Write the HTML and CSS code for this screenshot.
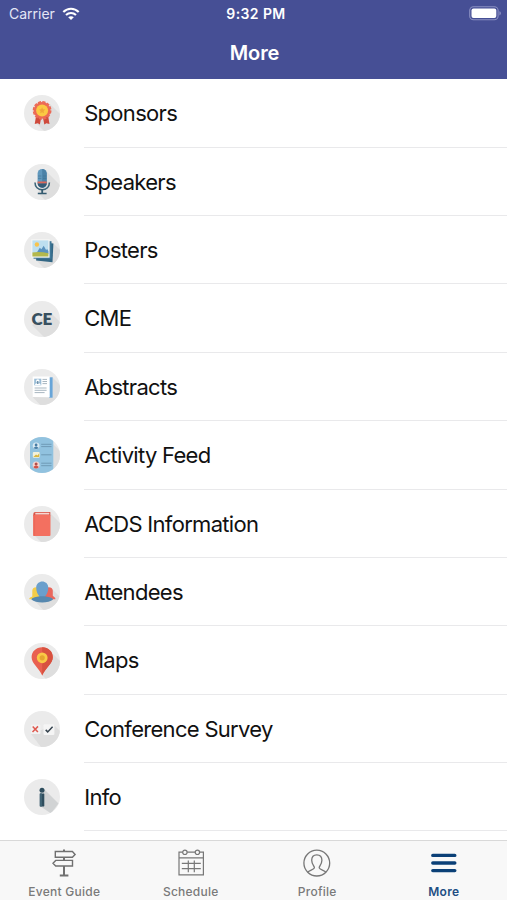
FILE: index.html
```html
<!DOCTYPE html>
<html lang="en">
<head>
<meta charset="utf-8">
<title>More</title>
<link rel="stylesheet" href="styles.css">
</head>
<body>
<svg class="defs" aria-hidden="true">
  <defs><clipPath id="disc"><circle cx="18" cy="18" r="18"/></clipPath></defs>
</svg>
<div class="app">
  <header class="header">
    <div class="status">
      <div class="carrier"><span>Carrier</span>
        <svg width="18" height="14" viewBox="0 0 18 14" fill="none" stroke="#fff" stroke-width="2.1"><path d="M1.3 5.1C5.7.7 12.3.7 16.7 5.1M4 8.1c2.9-2.8 7.1-2.8 10 0"/><path d="M6.2 10.3c1.6-1.5 4-1.5 5.6 0L9 13.1z" fill="#fff" stroke="none"/></svg>
      </div>
      <div class="time">9:32 PM</div>
      <svg class="battery" width="33" height="15" viewBox="0 0 33 15"><rect x=".7" y=".8" width="28.4" height="13" rx="3.8" fill="none" stroke="#8b90c2" stroke-width="1.1"/><rect x="2.5" y="2.5" width="24.8" height="9.6" rx="2" fill="#fff"/><path d="M30.4 5.2c2 .7 2 3.5 0 4.2z" fill="#8b90c2"/></svg>
    </div>
    <h1 class="title">More</h1>
  </header>

  <main class="list">
    <div class="row">
      <svg class="icon" viewBox="0 0 36 36"><g clip-path="url(#disc)"><path class="disc" d="M0 0h36v36H0z"/><path class="shade" d="M26 9l14 14v17H24l-12-12z"/></g><path d="M12.4 19l-1.7 10 3.1-.8 2.1 1.4L17.7 20zM23.8 19l1.7 10-3.1-.8-2.1 1.4L18.5 20z" fill="#cf4a3c"/><circle cx="18.1" cy="15.4" r="8.4" fill="#ec6a55"/><circle cx="18.1" cy="15.4" r="8.6" fill="none" stroke="#ec6a55" stroke-width="1.6" stroke-dasharray="3.2 1.3"/><circle cx="18.1" cy="15.4" r="6" fill="#fbc943"/><path d="M18.1 12.3l.9 2 2.2.3-1.6 1.5.4 2.2-1.9-1.1-1.9 1.1.4-2.2-1.6-1.5 2.2-.3z" fill="#efa83a"/></svg>
      <div class="label">Sponsors</div>
    </div>
    <div class="row">
      <svg class="icon" viewBox="0 0 36 36"><g clip-path="url(#disc)"><path class="disc" d="M0 0h36v36H0z"/><path class="shade" d="M22 7l18 18v15H25L14 29z"/></g><path d="M11 18.5c0 4.4 3 7.3 7.2 7.3s7.2-2.9 7.2-7.3" fill="none" stroke="#3d6579" stroke-width="1.6"/><path d="M17.3 25h1.8v3.9h-1.8zM13.8 28.7h8.8v1.6h-8.8z" fill="#345b70"/><rect x="13.6" y="5" width="9.1" height="18.8" rx="4.5" fill="#6198bd"/><path d="M18.2 5c2.5 0 4.5 2 4.5 4.5v9.8c0 2.5-2 4.5-4.5 4.5z" fill="#4c82a7"/><path d="M14 12h3.4M14 14.4h3.4M19 12h3.4M19 14.4h3.4" stroke="#427390" stroke-width=".6"/><path d="M13.6 17.5h9.1v2.1h-9.1z" fill="#dc6758"/><path d="M13.6 19.5h9.1c-.2 5.5-8.9 5.5-9.1 0z" fill="#345b76"/></svg>
      <div class="label">Speakers</div>
    </div>
    <div class="row">
      <svg class="icon" viewBox="0 0 36 36"><g clip-path="url(#disc)"><path class="disc" d="M0 0h36v36H0z"/><path class="shade" d="M28 10l12 12v18H24L10 26z"/></g><path d="M13 10l16.4 1.6-.9 18.6-16.4-1.7z" fill="#336785"/><rect x="9.5" y="9.2" width="18" height="17.5" fill="#3f7897"/><rect x="7.2" y="7.2" width="18.4" height="18.5" fill="#f5f6f4"/><path d="M8.4 8.4h16v12.8h-16z" fill="#bddff0"/><circle cx="12.9" cy="12.5" r="2.2" fill="#f8c34c"/><path d="M12.2 21.5l3.6-5.8 1.6 1.6 2.3-3.5 2.4 4.2 1-1.1 1.3 2v3z" fill="#5a93bf"/><path d="M8.4 20.4q8-1 16 .8v3.4h-16z" fill="#b3b84c"/></svg>
      <div class="label">Posters</div>
    </div>
    <div class="row">
      <svg class="icon" viewBox="0 0 36 36"><g clip-path="url(#disc)"><path class="disc" d="M0 0h36v36H0z"/><path class="shade" d="M27 12l12 12v16H24L8 24z"/></g><text x="17.9" y="24.1" class="ce">CE</text></svg>
      <div class="label">CME</div>
    </div>
    <div class="row">
      <svg class="icon" viewBox="0 0 36 36"><g clip-path="url(#disc)"><path class="disc" d="M0 0h36v36H0z"/><path class="shade" d="M28 8l12 12v20H20L9 28.5z"/></g><path d="M25 8.3h3.6v20.4H25z" fill="#68a5d8"/><path d="M8.7 7.5h17v20.8l-17-.3z" fill="#fff"/><rect x="10.2" y="9.7" width="7.1" height="6.6" fill="#9bbdd6"/><circle cx="13.8" cy="12" r="1.7" fill="#fff"/><path d="M10.8 16q.2-2 3-2t3 2z" fill="#fff"/><path d="M13.2 12h1.2v3h-1.2z" fill="#557e9b"/><path d="M18.5 10.4H23M18.5 12.5H23M18.5 14.6H23M10.6 19h12M10.6 21.3h12M10.6 23.6h10" stroke="#a9b7c1" stroke-width="1"/></svg>
      <div class="label">Abstracts</div>
    </div>
    <div class="row">
      <svg class="icon" viewBox="0 0 36 36"><g clip-path="url(#disc)"><path class="disc" d="M0 0h36v36H0z"/><path class="shade" d="M29 7l9 9v20h-9z"/><path d="M6 0h23.3v36H6z" fill="#91c2df"/></g><circle cx="12.1" cy="8.8" r="3.4" fill="#d9e9f2"/><circle cx="12.1" cy="8" r="1.4" fill="#477da6"/><path d="M9.5 11q2.6-3 5.2 0-2.6 2-5.2 0z" fill="#477da6"/><rect x="8.8" y="15" width="6.9" height="5.8" rx="1" fill="#f2f2dc"/><path d="M9.3 20l2.7-2.6 1.5 1 1.7-2.2V20z" fill="#d9b740"/><circle cx="12.1" cy="28" r="3.5" fill="#f4d7d2"/><circle cx="12.1" cy="27" r="1.5" fill="#b34e49"/><path d="M9.3 30q2.8-3.2 5.6 0-2.8 3-5.6 0z" fill="#cf5148"/><path d="M17.2 7.3h10.3M17.2 9.6h10.3M17.2 17.8h10.3M17.2 26.2h10.3M17.2 28.7h10.3" stroke="#6f9ab6" stroke-width="1"/></svg>
      <div class="label">Activity Feed</div>
    </div>
    <div class="row">
      <svg class="icon" viewBox="0 0 36 36"><g clip-path="url(#disc)"><path class="disc" d="M0 0h36v36H0z"/><path class="shade" d="M26 7l14 14v19H21L11 30z"/></g><path d="M9.3 8q0-2 2-2h15v4H9.3z" fill="#d95345"/><path d="M11.3 6.8h14v1.7h-14z" fill="#f7d7d1"/><rect x="9.3" y="8.9" width="17.2" height="21" rx="1" fill="#f37060"/><path d="M9.3 9h1.8v20.9H9.3z" fill="#ec6859"/></svg>
      <div class="label">ACDS Information</div>
    </div>
    <div class="row">
      <svg class="icon" viewBox="0 0 36 36"><g clip-path="url(#disc)"><path class="disc" d="M0 0h36v36H0z"/><path class="shade" d="M27 14l11 11v14H22L11 27z"/></g><path d="M8.3 16.5c0-4.5 7.5-4.5 7.5 0v8.7H5.4c-.7-2 2.9-2.2 2.9-3.3z" fill="#f4cd49"/><path d="M21 16.5c0-4.5 7.8-4.5 7.8 0v5c0 1.2 3 1.5 2.6 3.7H21z" fill="#e9675c"/><path d="M12.2 13.6c0-8.3 12.1-8.3 12.1 0 0 4.5-1.7 7.4-3.4 8.8v2h-5.3v-2c-1.7-1.4-3.4-4.3-3.4-8.8z" fill="#6a9fcc"/><path d="M7.4 25.5c1-2.2 5.1-2.6 8.2-3.2h5.3c3 .6 7.2 1 8.2 3.2-4.2 4-17.5 4-21.7 0z" fill="#5688af"/></svg>
      <div class="label">Attendees</div>
    </div>
    <div class="row">
      <svg class="icon" viewBox="0 0 36 36"><g clip-path="url(#disc)"><path class="disc" d="M0 0h36v36H0z"/><path class="shade" d="M26 8l14 14v18H26l-8-8z"/></g><path d="M18.2 4.2c-6.2 0-10.6 4.4-10.6 10 0 6.5 7.2 10.2 10.6 18.2 3.4-8 10.6-11.7 10.6-18.2 0-5.6-4.4-10-10.6-10z" fill="#e96050"/><path d="M18.2 4.2c6.2 0 10.6 4.4 10.6 10 0 6.5-7.2 10.2-10.6 18.2z" fill="#d8513f"/><circle cx="18.2" cy="14.8" r="5.4" fill="#fac846"/><circle cx="18.2" cy="14.8" r="2.6" fill="#e5a52f"/></svg>
      <div class="label">Maps</div>
    </div>
    <div class="row">
      <svg class="icon" viewBox="0 0 36 36"><g clip-path="url(#disc)"><path class="disc" d="M0 0h36v36H0z"/><path class="shade" d="M30 14l10 10v16H20L7 23z"/></g><rect x="7" y="13.5" width="9.5" height="9.6" rx="1" fill="#f2f2f2"/><rect x="19.5" y="13.3" width="10.9" height="10.8" rx="1" fill="#f5f5f5"/><path d="M8.7 15.4l5.2 5.6M14 15.4L8.5 21" stroke="#df5b51" stroke-width="1.5"/><path d="M21.7 18.9l2 2 4.9-5.1" fill="none" stroke="#35424d" stroke-width="1.5"/></svg>
      <div class="label">Conference Survey</div>
    </div>
    <div class="row">
      <svg class="icon" viewBox="0 0 36 36"><g clip-path="url(#disc)"><path class="disc" d="M0 0h36v36H0z"/><path class="shade-dark" d="M20 10l14.5 14.5-7.5 10L16 27z"/></g><circle cx="18" cy="11.2" r="2.5" fill="#2e4d5d"/><rect x="15.8" y="14.4" width="4.5" height="13" rx=".6" fill="#2e4d5d"/><path d="M15.8 14.4H18v13h-2.2z" fill="#3e6273"/></svg>
      <div class="label">Info</div>
    </div>
  </main>

  <nav class="tabs">
    <div class="tab">
      <svg width="28" height="28" viewBox="0 0 28 28" fill="none" stroke="#707070" stroke-width="1.4"><path d="M14 .6v2M14 8.2v3.2M14 17v9M9.8 26.5h8.6" stroke-width="2"/><path d="M5.3 2.5h17.1l2.7 2.9-2.7 2.9H5.3zM22.5 11.4H5.7L3 14.2 5.7 17h16.8z"/></svg>
      <span>Event Guide</span>
    </div>
    <div class="tab">
      <svg width="28" height="28" viewBox="0 0 28 28" fill="none" stroke="#777" stroke-width="1.2"><path d="M5.7 3.2H2v22.7h24.4V3.2h-3.8M10.1 3.2h8.2M2 8.9h24.4M4.8 14.4h19M4.8 19.6h19M11.3 11.5v11.8M17.3 11.5v11.8"/><circle cx="7.9" cy="3.3" r="2.2"/><circle cx="20.4" cy="3.3" r="2.2"/></svg>
      <span>Schedule</span>
    </div>
    <div class="tab">
      <svg width="28" height="28" viewBox="0 0 28 28" fill="none" stroke="#777" stroke-width="1.3"><circle cx="13.8" cy="14.1" r="12.9"/><path d="M4.8 23.2c1.4-2 6.1-2.4 6.6-4.4.3-1.5-2.7-3.5-2.7-7.5C8.7 8 10.7 5.8 13.8 5.8s5.1 2.2 5.1 5.5c0 4-3 6-2.7 7.5.5 2 5.2 2.4 6.6 4.4"/></svg>
      <span>Profile</span>
    </div>
    <div class="tab active">
      <svg width="28" height="28" viewBox="0 0 28 28" stroke="#0b4077" stroke-width="3.4" stroke-linecap="round"><path d="M2.8 6.4h22M2.8 14h22M2.8 21.6h22"/></svg>
      <span>More</span>
    </div>
  </nav>
</div>
</body>
</html>
```
FILE: styles.css
```css
* { box-sizing: border-box; }
body { margin: 0; background: #fff; font-family: Inter, "Liberation Sans", sans-serif; }
.defs { display: block; width: 0; height: 0; }
.app { display: flex; flex-direction: column; width: 507px; height: 900px; overflow: hidden; }
.header { flex: none; height: 79.2px; background: #464f95; color: #fff; }
.status { display: grid; grid-template-columns: 1fr auto 1fr; align-items: center; height: 27px; padding: 0 5px 0 9px; }
.carrier { display: flex; align-items: center; gap: 7px; font-size: 14px; line-height: 27px; letter-spacing: 0; color: #e4e6f5; }
.time { padding-left: 1px; font-size: 14px; line-height: 27px; font-weight: 600; letter-spacing: 0.4px; }
.battery { justify-self: end; }
.title { margin: 0; padding-left: 2px; text-align: center; font-size: 20px; line-height: 52px; font-weight: 600; letter-spacing: -0.1px; }
.list { flex: 1; min-height: 0; overflow: hidden; }
.row { display: flex; align-items: center; gap: 23.9px; height: 68.4px; padding-left: 24.3px; }
.icon { flex: none; width: 36px; height: 36px; }
.disc { fill: #ebebeb; }
.shade { fill: #dedede; }
.shade-dark { fill: #d1d3d4; }
.ce { font: 800 17px Lato, sans-serif; text-anchor: middle; fill: #38505f; }
.label { flex: 1; height: 100%; border-bottom: 1.5px solid #e9e9eb; font-size: 22px; line-height: 68px; letter-spacing: -0.7px; color: #111; }
.tabs { flex: none; display: grid; grid-template-columns: repeat(4, 1fr); height: 60.5px; padding-left: 1px; border-top: 1px solid #d9d9d9; background: #f8f8f8; }
.tab { display: flex; flex-direction: column; align-items: center; padding-top: 8px; color: #7a7a7a; font-size: 12px; font-weight: 500; letter-spacing: 0.25px; }
.tab svg { display: block; }
.tab span { margin-top: 7px; line-height: 15px; }
.active { color: #1e4e83; font-weight: 600; }
```
